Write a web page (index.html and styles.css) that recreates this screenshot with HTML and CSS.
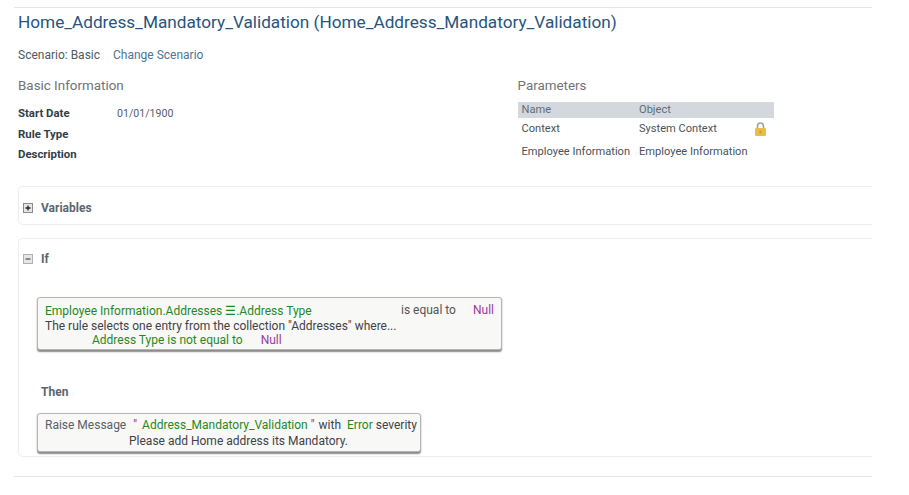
FILE: index.html
```html
<!DOCTYPE html>
<html lang="en">
<head>
<meta charset="utf-8">
<title>Home_Address_Mandatory_Validation</title>
<link rel="stylesheet" href="styles.css">
</head>
<body>
<main class="page">
  <h1 class="title">Home_Address_Mandatory_Validation (Home_Address_Mandatory_Validation)</h1>
  <div class="scenario"><span>Scenario: Basic</span><a class="link">Change Scenario</a></div>
  <div class="columns">
    <section class="info">
      <h2 class="heading">Basic Information</h2>
      <dl class="fields">
        <dt>Start Date</dt><dd>01/01/1900</dd>
        <dt>Rule Type</dt><dd></dd>
        <dt>Description</dt><dd></dd>
      </dl>
    </section>
    <section class="params">
      <h2 class="heading">Parameters</h2>
      <div class="ptable">
        <div class="phead"><span>Name</span><span>Object</span><span></span></div>
        <div class="prow"><span>Context</span><span>System Context</span>
          <svg class="lock" width="11" height="14" viewBox="0 0 11 14"><path d="M2.500 6.500V4a3 3 0 0 1 6 0V6.500" fill="none" stroke="#a3a39a" stroke-width="1.600"/><rect x="0" y="6" width="11" height="8" rx="1" fill="#ebbd48"/><rect x="4.500" y="8.500" width="2" height="3" fill="#c99f33"/></svg>
        </div>
        <div class="prow"><span>Employee Information</span><span>Employee Information</span><span></span></div>
      </div>
    </section>
  </div>

  <section class="card card-vars">
    <div class="card-head">
      <svg class="toggle" width="10" height="10" viewBox="0 0 10 10"><rect x="0.500" y="0.500" width="9" height="9" fill="#e6e6e6" stroke="#8a8a8a"/><path d="M2.500 5h5M5 2.500v5" stroke="#222" stroke-width="1.300"/></svg>
      <strong>Variables</strong>
    </div>
  </section>

  <section class="card card-if">
    <div class="card-head">
      <svg class="toggle" width="10" height="10" viewBox="0 0 10 10"><rect x="0.500" y="0.500" width="9" height="9" fill="#e6e6e6" stroke="#b0b0b0"/><path d="M2.500 5h5" stroke="#555" stroke-width="1.300"/></svg>
      <strong>If</strong>
    </div>
    <div class="box box-if">
      <div class="line-top"><span class="green">Employee Information.Addresses ☰.Address Type</span><span class="eq">is equal to</span><span class="purple">Null</span></div>
      <div class="line-rule">The rule selects one entry from the collection "Addresses" where...</div>
      <div class="line-sub"><span class="green">Address Type is not equal to</span><span class="purple">Null</span></div>
    </div>
    <strong class="then">Then</strong>
    <div class="box box-then">
      <div class="msg"><span class="raise">Raise Message</span><span class="red q-open">"</span><span class="green">Address_Mandatory_Validation</span> <span class="red q-close">"</span>with <span class="green err">Error</span>severity</div>
      <div class="msg-text">Please add Home address its Mandatory.</div>
    </div>
  </section>
</main>
</body>
</html>
```

FILE: styles.css
```css
html, body { margin: 0; padding: 0; background: #fff; }
body { font-family: "Roboto", "Liberation Sans", sans-serif; font-size: 12px; color: #3f4a55; height: 495px; overflow: hidden; }
.page { width: 858px; margin: 7px 0 0 14px; height: 470px; border-top: 1px solid #e5e5e5; border-bottom: 1px solid #e5e5e5; padding-left: 4px; box-sizing: border-box; overflow: hidden; }
.title { margin: 0; padding-top: 2px; font-size: 17.200px; line-height: 24px; font-weight: 400; color: #27557f; white-space: nowrap; }
.scenario { display: flex; gap: 13px; margin-top: 13px; line-height: 16px; color: #4f5a64; }
.link { color: #4e7592; }
.columns { display: flex; margin-top: 13px; height: 110px; }
.info { width: 499.500px; }
.heading { margin: 0; padding-top: 1px; font-size: 13.400px; line-height: 18px; font-weight: 400; color: #6f7478; }
.fields { display: grid; grid-template-columns: 99px 1fr; grid-auto-rows: 20.500px; margin: 8px 0 0; align-items: center; font-size: 11.400px; }
.fields dt { font-weight: 700; color: #333e48; }
.fields dd { margin: 0; color: #55606a; font-size: 10.600px; }
.params { width: 256px; }
.ptable { margin-top: 7px; font-size: 11.100px; }
.phead { display: grid; grid-template-columns: 117.500px 1fr 19px; background: #d2d8de; height: 16px; line-height: 16px; padding-left: 4px; color: #626c76; }
.prow { display: grid; grid-template-columns: 117.500px 1fr 19px; padding: 3px 0 0 4px; box-sizing: border-box; line-height: 16px; height: 23px; align-items: start; color: #4a525a; white-space: nowrap; }
.lock { display: block; margin-top: 1px; }
.card { border: 1px solid #eeeeee; border-right: 0; border-radius: 5px 0 0 5px; box-sizing: border-box; }
.card-vars { height: 39px; }
.card-if { height: 219px; margin-top: 13px; }
.card-head { display: flex; align-items: center; gap: 8px; padding-left: 4px; height: 40px; color: #5b6570; }
.card-head strong { font-weight: 700; font-size: 12px; }
.card-vars .card-head { height: 41px; }
.box { background: #f8f8f6; border: 1px solid #b5b5b5; border-radius: 3px; box-shadow: 0 1.500px 1.500px #8a8a8a; margin-left: 18px; box-sizing: border-box; color: #3f4347; line-height: 14px; font-size: 12px; }
.box-if { width: 465px; height: 53px; margin-top: 18px; padding: 6px 7px 0; }
.line-top { display: flex; }
.line-top .green { width: 356px; }
.eq { width: 72px; margin-top: -1px; color: #555; }
.line-top .purple { margin-top: -1px; }
.line-rule { margin-top: 1px; white-space: nowrap; }
.line-sub { padding-left: 47px; display: flex; gap: 18px; }
.green { color: #1f8a1f; }
.purple { color: #9a3aa0; }
.red { color: #a33; }
.then { display: block; margin: 34px 0 0 22px; line-height: 16px; color: #5b6570; }
.box-then { width: 384px; height: 39px; margin-top: 13px; padding: 4px 0 0 7px; white-space: nowrap; }
.raise { margin-right: 7px; color: #55606a; }
.q-open { margin-right: 5px; }
.q-close { margin-right: 4px; }
.err { margin: 0 3px 0 3px; }
.msg-text { margin-top: 2px; padding-left: 84px; }
```
